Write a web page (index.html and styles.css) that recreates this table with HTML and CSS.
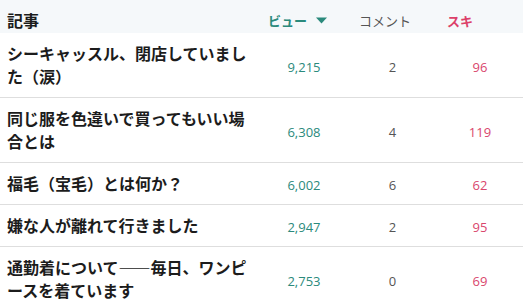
FILE: index.html
```html
<!DOCTYPE html>
<html lang="ja">
<head>
<meta charset="utf-8">
<link rel="stylesheet" href="styles.css">
</head>
<body>
<div class="table">
  <div class="row head">
    <div class="cell title">記事</div>
    <div class="cell views-h">ビュー <svg class="arrow" width="11" height="7" viewBox="0 0 11 7"><path d="M0 0.5 H11 L5.5 6.5 Z" fill="currentColor"/></svg></div>
    <div class="cell comments-h">コメント</div>
    <div class="cell likes-h">スキ</div>
  </div>
  <div class="row">
    <div class="cell title">シーキャッスル、閉店していました（涙）</div>
    <div class="cell num views">9,215</div>
    <div class="cell num comments">2</div>
    <div class="cell num likes">96</div>
  </div>
  <div class="row">
    <div class="cell title">同じ服を色違いで買ってもいい場合とは</div>
    <div class="cell num views">6,308</div>
    <div class="cell num comments">4</div>
    <div class="cell num likes">119</div>
  </div>
  <div class="row">
    <div class="cell title">福毛（宝毛）とは何か？</div>
    <div class="cell num views">6,002</div>
    <div class="cell num comments">6</div>
    <div class="cell num likes">62</div>
  </div>
  <div class="row">
    <div class="cell title">嫌な人が離れて行きました</div>
    <div class="cell num views">2,947</div>
    <div class="cell num comments">2</div>
    <div class="cell num likes">95</div>
  </div>
  <div class="row">
    <div class="cell title">通勤着について——毎日、ワンピースを着ています</div>
    <div class="cell num views">2,753</div>
    <div class="cell num comments">0</div>
    <div class="cell num likes">69</div>
  </div>
</div>
</body>
</html>
```

FILE: styles.css
```css
html, body {
  margin: 0;
  padding: 0;
  background: #fff;
}
body {
  font-family: "Noto Sans CJK JP", "Noto Sans", sans-serif;
  color: #222;
}
.table {
  width: 523px;
}
.row {
  display: grid;
  grid-template-columns: 260px 88px 89px 86px;
  align-items: center;
  border-bottom: 1px solid #dedede;
}
.row.head {
  background: #f5f8fa;
  border-bottom: none;
  height: 33px;
  font-size: 13px;
  line-height: 17px;
}
.head .cell {
  padding: 0 0 0 8px;
}
.head .title {
  padding-left: 7px;
  font-weight: 700;
  color: #222;
}
.views-h {
  color: #2b8a7c;
  font-weight: 700;
  display: flex;
  align-items: center;
  gap: 3px;
}
.arrow {
  margin-left: 6px;
}
.comments-h {
  color: #555;
  padding-left: 11px !important;
}
.likes-h {
  color: #dc4069;
  font-weight: 700;
  padding-left: 10px !important;
}
.cell.title {
  padding: 9px 12px 9px 7px;
  font-size: 16px;
  line-height: 23px;
  font-weight: 700;
  color: #1c1c1c;
}
.num {
  text-align: center;
  font-family: "Open Sans", sans-serif;
  font-size: 13px;
  padding-top: 3px;
}
.views { color: #2b8a7c; }
.comments { color: #555; }
.likes { color: #d9466d; }
```
